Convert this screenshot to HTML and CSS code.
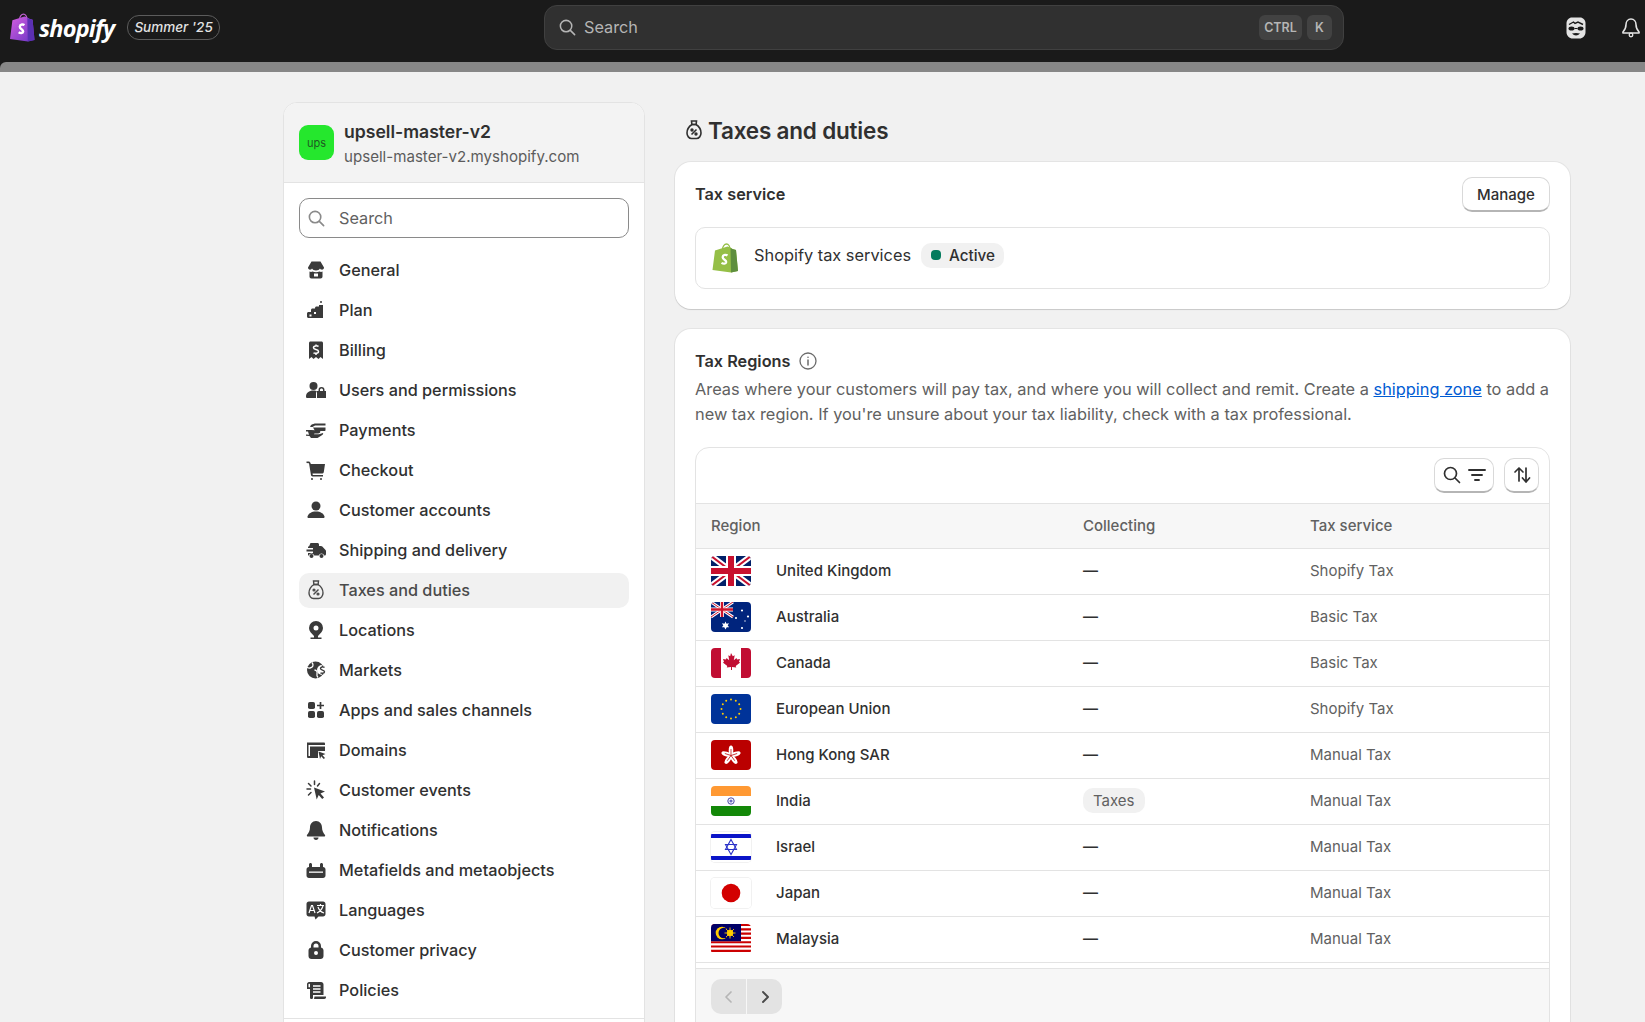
FILE: index.html
```html
<!DOCTYPE html>
<html lang="en">
<head>
    <meta charset="UTF-8">
    <meta name="viewport" content="width=device-width, initial-scale=1.0">
    <title>Taxes and duties</title>
    <link rel="stylesheet" href="styles.css">
</head>
<body>
    <div class="topbar">
        <div class="brand">
            <svg class="logo-bag" viewBox="0 0 26 30">
                <defs>
                    <linearGradient id="bag" x1="0" y1="0" x2="1" y2="1">
                        <stop offset="0" stop-color="#d65ee0"/>
                        <stop offset="1" stop-color="#6a35c4"/>
                    </linearGradient>
                </defs>
                <path d="M10 6.500c0-3 2-5.500 4-5.500 2 0 3.500 2.500 3.500 5.500" fill="none" stroke="#c060d0" stroke-width="1.300"/>
                <path d="M2.500 7.500 15 3.500l3 1 2 1.500 3.500 1 2 21-7 1.500L0 27z" fill="url(#bag)"/>
                <path d="M18 5l2 1 3.500 1 2 21-7 1.500z" fill="#5b30b4"/>
                <path d="M15 12.500c-1-.8-4.500-1.300-4.800 1.500-.3 2.700 3.800 2.800 3.500 5.200-.3 2-3 1.800-4.700.7" fill="none" stroke="#fff" stroke-width="2.500"/>
            </svg>
            <span class="wordmark">shopify</span>
            <span class="edition">Summer '25</span>
        </div>
        <div class="global-search">
            <svg class="global-search-icon" viewBox="0 0 20 20"><circle cx="8.500" cy="8.500" r="6" fill="none" stroke="#b5b5b5" stroke-width="1.600"/><path d="M13 13l4.500 4.500" stroke="#b5b5b5" stroke-width="1.600" stroke-linecap="round"/></svg>
            <span class="global-search-text">Search</span>
            <span class="key key-ctrl">CTRL</span>
            <span class="key key-k">K</span>
        </div>
        <div class="top-actions">
            <svg class="top-face" viewBox="0 0 20 22">
                <path d="M6 .5h8c3 0 5.500 2.500 5.500 5.500v9c0 4-3 6.500-6 6.500h-7c-3 0-6-2.500-6-6.500V6C.500 3 3 .5 6 .5z" fill="#e3e3e3"/>
                <path d="M3 7.500 7.500 5l1.500 1.500L12 5l5 2.500" fill="none" stroke="#1a1a1a" stroke-width="1.400"/>
                <ellipse cx="5.500" cy="11.500" rx="3" ry="2" fill="#1a1a1a"/>
                <ellipse cx="14.500" cy="11.500" rx="3" ry="2" fill="#1a1a1a"/>
                <path d="M8.500 11.500h3" stroke="#1a1a1a" stroke-width="1"/>
                <path d="M6 16.500c2.500 2.500 5.500 2.500 8 0-2.500-.8-5.500-.8-8 0z" fill="#1a1a1a"/>
            </svg>
            <svg class="top-bell" viewBox="0 0 20 22">
                <path d="M10 1.500c-3.500 0-5.500 3-5.500 6 0 4-1.500 6.500-3.500 8.500v1h18v-1c-2-2-3.500-4.500-3.500-8.500 0-3-2-6-5.500-6z" fill="none" stroke="#e3e3e3" stroke-width="1.700" stroke-linejoin="round"/>
                <circle cx="10" cy="19.300" r="2" fill="none" stroke="#e3e3e3" stroke-width="1.500"/>
            </svg>
        </div>
    </div>
    <div class="strip-wrap"><div class="strip"></div></div>

    <div class="page">
        <div class="settings-nav">
            <div class="shop-head">
                <div class="shop-avatar">ups</div>
                <div class="shop-text">
                    <div class="shop-name">upsell-master-v2</div>
                    <div class="shop-domain">upsell-master-v2.myshopify.com</div>
                </div>
            </div>
            <div class="nav-body">
                <div class="nav-search">
                    <svg class="nav-search-icon" viewBox="0 0 20 20"><circle cx="8.500" cy="8.500" r="6" fill="none" stroke="#8a8a8a" stroke-width="1.700"/><path d="M13 13l4.500 4.500" stroke="#8a8a8a" stroke-width="1.700" stroke-linecap="round"/></svg>
                    <span>Search</span>
                </div>
                <ul class="nav-list">
                    <li><svg viewBox="0 0 20 20"><path d="M5.500 1.500h9L18 7.500c.3 2-2.800 3.200-4 1-1 2.500-7 2.500-8 0-1.200 2.200-4.300 1-4-1z"/><path d="M3.500 11.500c1 .5 2 .5 3 0 2 1 5 1 7 0 1 .5 2 .5 3 0v5c0 1-.7 2-2 2h-9c-1.300 0-2-1-2-2zM8 13.500v3h4v-3z" fill-rule="evenodd"/></svg>General</li>
                    <li><svg viewBox="0 0 20 20"><path d="M15 1v2"  stroke="#3a3a3a" stroke-width="1.500" fill="none"/><path d="M13 5h4v13H2.500c-.8 0-1.500-.7-1.500-1.500v-3c0-.8.700-1.500 1.500-1.500H5v-2c0-.8.700-1.500 1.500-1.500H9V8c0-.8.700-1.500 1.500-1.500H13z"/><path d="M3.500 14.500h2v2h-2zM8 12h2v2H8z" fill="#fff"/></svg>Plan</li>
                    <li><svg viewBox="0 0 20 20"><path d="M4.500 1.500h11c.8 0 1.500.7 1.500 1.500v16l-2.500-2-2 2-2.500-2-2.500 2-2-2L3 19V3c0-.8.700-1.500 1.500-1.500z"/><path d="M12.500 6.500c-.8-.8-5-1.200-5 1.200 0 2.300 5 1.300 5 3.800 0 2.300-4.200 2-5 1.200M10 4.500v1.500M10 13.500V15" fill="none" stroke="#fff" stroke-width="1.500"/></svg>Billing</li>
                    <li><svg viewBox="0 0 20 20"><circle cx="7.500" cy="6" r="4"/><path d="M0 16.500c0-3.500 3-6 7.500-6 1.500 0 2.500.3 3.500.7-.7.8-1 1.500-1 2.800v4H1.500C.5 18 0 17.500 0 16.500z"/><path d="M15.500 7a3 3 0 0 1 3 3v1H20v7h-9v-7h1.500v-1a3 3 0 0 1 3-3zm-1.500 4h3v-1c0-2-3-2-3 0z" fill-rule="evenodd"/></svg>Users and permissions</li>
                    <li><svg viewBox="0 0 20 20"><path d="M5 5c2-1 3-1.500 5-1.500h9.500v2H9L6.500 7H4z"/><path d="M7 7.500h12.500V10c0 .6-.4 1-1 1H9z"/><path d="M0 10h5l9 .5c1 1.800-.5 3-2 3H8.500l-.5.7h5l4-1.200c.8 1-.7 2-1.500 2.500l-4 2.500H5L3.500 16 0 15.800V14.500l3 .3-1-3.300H0z" fill-rule="evenodd"/></svg>Payments</li>
                    <li><svg viewBox="0 0 20 20"><path d="M.5 1.500h2c1 0 1.800.7 2 1.500l.3 1H19l-1.200 8c-.2 1-1 1.500-2 1.500H6.500l.3 1.500H17v1.500H6.500c-.8 0-1.300-.5-1.500-1.200L3 3.200 .5 3z"/><circle cx="6" cy="19" r="1"/><circle cx="15" cy="19" r="1"/></svg>Checkout</li>
                    <li><svg viewBox="0 0 20 20"><circle cx="10" cy="6" r="4.500"/><path d="M2.500 18c-.8 0-1.200-.7-1-1.500.8-3 4-5 8.500-5s7.700 2 8.500 5c.2.800-.2 1.500-1 1.500z"/></svg>Customer accounts</li>
                    <li><svg viewBox="0 0 20 20"><path d="M4.500 3h7c.8 0 1.500.7 1.500 1.500V6h2c.5 0 1 .2 1.300.6L19.500 10c.3.300.5.800.5 1.200V14c0 .8-.5 1.500-1.300 1.500h-.4a3 3 0 0 0-5.600 0H8.300a3 3 0 0 0-5.600 0H2V13h5v-1.500H.5V9.500h6.500V8H2V6.500h1z"/><circle cx="5.500" cy="16" r="2"/><circle cx="15.500" cy="16" r="2"/></svg>Shipping and delivery</li>
                    <li class="active"><svg viewBox="0 0 20 20" stroke="#4a4a4a" stroke-width="1.400"><path d="M7.500 1h5l-.4 3.500H7.900z"/><path d="M8 4.500C4 7 3 10 3 13c0 3 2 5.500 4.500 5.500h5c2.500 0 4.500-2.500 4.500-5.500 0-3-1-6-5-8.500z"/><path d="M7.500 14.500l5-5"/><circle cx="8" cy="10" r=".9"/><circle cx="12" cy="14" r=".9"/></svg>Taxes and duties</li>
                    <li><svg viewBox="0 0 20 20"><path d="M10 1a7 7 0 0 1 7 7c0 3-2.500 5.500-5 8v1.500h3.500V19h-11v-1.500H8V16c-2.500-2.500-5-5-5-8a7 7 0 0 1 7-7zm0 4.500a2.500 2.500 0 1 0 0 5 2.500 2.500 0 0 0 0-5z" fill-rule="evenodd"/></svg>Locations</li>
                    <li><svg viewBox="0 0 20 20"><circle cx="9.500" cy="10" r="8.500"/><path d="M6 2.500C8 5 7 7.500 4 8c-1.500.3-2.500-.2-3-.8M8.500 10c2 .3 3 1.500 2.500 3.500-.3 1.500 0 3 1 4" fill="none" stroke="#fff" stroke-width="1.300"/><circle cx="16" cy="10" r="5" fill="#fff"/><path d="M18.500 7.500c-.8-.8-4-1-4 1 0 2 4 1.200 4 3.200 0 2-3.200 1.700-4 1M16.500 5.500v1.800M16.500 13v1.800" fill="none" stroke="#3a3a3a" stroke-width="1.400"/></svg>Markets</li>
                    <li><svg viewBox="0 0 20 20"><rect x="2" y="2" width="7" height="7" rx="1.800"/><rect x="2" y="11" width="7" height="7" rx="1.800"/><rect x="11" y="11" width="7" height="7" rx="1.800"/><path d="M14.500 2v7M11 5.500h7" stroke="#3a3a3a" stroke-width="1.700" fill="none"/></svg>Apps and sales channels</li>
                    <li><svg viewBox="0 0 20 20"><path d="M1 2.500h17c.5 0 1 .5 1 1V5H2.500v11H5v2H2.500C1.500 18 1 17.500 1 16.500z"/><path d="M4 6.500h15V11l-7 0v7H5c-.5 0-1-.5-1-1z"/><path d="M12.500 11.500l7 2.500-3 1.200 2.500 2.800-1.300 1-2.500-2.800-1.200 2.800z"/></svg>Domains</li>
                    <li><svg viewBox="0 0 20 20"><path d="M8 7.500l11 4-4.500 2 3.500 4-1.800 1.500-3.500-4-2 4.500z"/><path d="M8.500 1v3.500M2.500 3.500 5 6M1 9h3.500M2.500 15 5 12.500M13.500 3.500 11.500 6" fill="none" stroke="#3a3a3a" stroke-width="1.500" stroke-linecap="round"/></svg>Customer events</li>
                    <li><svg viewBox="0 0 20 20"><path d="M10 1c-3.800 0-6 3-6 6.500 0 3.500-1.500 5.500-3 7.500-.5.800 0 1.500 1 1.500h16c1 0 1.500-.7 1-1.500-1.500-2-3-4-3-7.500C16 4 13.800 1 10 1z"/><path d="M7.500 17.500c0 1.500 1 2.500 2.500 2.500s2.500-1 2.500-2.500z"/></svg>Notifications</li>
                    <li><svg viewBox="0 0 20 20"><path d="M4.500 3c.8 0 1.500.7 1.500 1.500V7h8V4.500c0-.8.700-1.500 1.500-1.500S17 3.700 17 4.500V7c1.500 0 2.500 1 2.500 2.500v6c0 1.500-1 2.500-2.500 2.500H3c-1.500 0-2.500-1-2.500-2.500v-6C.5 8 1.500 7 3 7V4.500C3 3.700 3.700 3 4.500 3z"/><path d="M3 11.500h14v1.300H3z" fill="#fff"/></svg>Metafields and metaobjects</li>
                    <li><svg viewBox="0 0 20 20"><path d="M3 1.500h14c1.500 0 2.500 1 2.500 2.500v10c0 1.500-1 2.500-2.500 2.500h-4.500L9.500 19.500 8.500 16.500H3C1.500 16.500.5 15.500.5 14V4C.5 2.500 1.500 1.500 3 1.500z"/><path d="M3 13l2.500-7.500h1L9 13M4 10.500h4M11 5.500h7M14.500 4v1.500M17 6c-1 3-3 5.500-6 7M12 7c1 3 3 5 6 6" fill="none" stroke="#fff" stroke-width="1.200"/></svg>Languages</li>
                    <li><svg viewBox="0 0 20 20"><path d="M10 1a5 5 0 0 1 5 5v1.500c1.500.3 2.500 1.500 2.500 3V16c0 1.700-1.300 3-3 3h-9c-1.700 0-3-1.300-3-3v-5.500c0-1.500 1-2.700 2.500-3V6a5 5 0 0 1 5-5zm-2.500 6.500h5V6a2.500 2.500 0 0 0-5 0zM10 11a2 2 0 1 0 0 4 2 2 0 0 0 0-4z" fill-rule="evenodd"/></svg>Customer privacy</li>
                    <li><svg viewBox="0 0 20 20"><path d="M3 2h12c1.500 0 2.500 1 2.500 2.500V15H7v2.500c0 1-.7 1.500-1.500 1.500S4 18.500 4 17.500V9H1V4c0-1 1-2 2-2zm0 1.800c-.3 0-.5.200-.5.500v3H4V4.300c0-.3-.2-.5-.5-.5z" fill-rule="evenodd"/><path d="M7 6h7.500M7 9h7.500M7 12h7.500" stroke="#fff" stroke-width="1.400" fill="none"/><path d="M8.500 16.500H20v.8c0 1-.8 1.700-1.700 1.700H8z"/></svg>Policies</li>
                </ul>
            </div>
            <div class="nav-divider"></div>
        </div>

        <div class="main">
            <div class="page-title">
                <svg viewBox="0 0 20 20" fill="none" stroke="#303030" stroke-width="1.600"><path d="M7.500 1h5l-.4 3.500H7.900z"/><path d="M8 4.500C4 7 3 10 3 13c0 3 2 5.500 4.500 5.500h5c2.500 0 4.500-2.500 4.500-5.500 0-3-1-6-5-8.500z"/><path d="M7.500 14.500l5-5"/><circle cx="8" cy="10" r=".9"/><circle cx="12" cy="14" r=".9"/></svg>
                <h1>Taxes and duties</h1>
            </div>

            <div class="card">
                <div class="card-head">
                    <h2>Tax service</h2>
                    <button class="btn">Manage</button>
                </div>
                <div class="service">
                    <svg class="service-bag" viewBox="0 0 26 30">
                        <path d="M10 6.500c0-3 2-5.500 4-5.500 2 0 3.500 2.500 3.500 5.500" fill="none" stroke="#95bf47" stroke-width="1.300"/>
                        <path d="M2.500 7.500 15 3.500l3 1 2 1.500 3.500 1 2 21-7 1.500L0 27z" fill="#95bf47"/>
                        <path d="M18 5l2 1 3.500 1 2 21-7 1.500z" fill="#5e8e3e"/>
                        <path d="M15 12.500c-1-.8-4.500-1.300-4.800 1.500-.3 2.700 3.800 2.800 3.500 5.200-.3 2-3 1.800-4.700.7" fill="none" stroke="#fff" stroke-width="2.300"/>
                    </svg>
                    <span class="service-name">Shopify tax services</span>
                    <span class="badge-active"><span class="dot"></span>Active</span>
                </div>
            </div>

            <div class="card regions">
                <div class="regions-title">
                    <h2>Tax Regions</h2>
                    <svg viewBox="0 0 20 20" fill="none" stroke="#6b6b6b" stroke-width="1.300"><circle cx="10" cy="10" r="8"/><path d="M10 9v5" stroke-width="1.500" stroke-linecap="round"/><circle cx="10" cy="6.300" r=".8" fill="#6b6b6b" stroke="none"/></svg>
                </div>
                <p class="regions-text">Areas where your customers will pay tax, and where you will collect and remit. Create a <a href="#">shipping zone</a> to add a new tax region. If you're unsure about your tax liability, check with a tax professional.</p>

                <div class="table-box">
                    <div class="toolbar">
                        <button class="tool tool-wide">
                            <svg viewBox="0 0 20 20" fill="none" stroke="#303030" stroke-width="1.700"><circle cx="8.500" cy="8.500" r="6"/><path d="M13 13l4.500 4.500" stroke-linecap="round"/></svg>
                            <svg viewBox="0 0 20 20" fill="none" stroke="#303030" stroke-width="1.900"><path d="M2 5h16M5 10h10M8 15h4" stroke-linecap="round"/></svg>
                        </button>
                        <button class="tool">
                            <svg viewBox="0 0 20 20" fill="none" stroke="#303030" stroke-width="1.700" stroke-linecap="round" stroke-linejoin="round"><path d="M7 16V3M3 7l4-4 4 4"/><path d="M14 3v14M10.500 13l3.500 4 3.500-4"/></svg>
                        </button>
                    </div>
                    <table>
                        <colgroup><col class="col-region"><col class="col-collect"><col></colgroup>
                        <thead>
                            <tr><th>Region</th><th>Collecting</th><th>Tax service</th></tr>
                        </thead>
                        <tbody>
                            <tr>
                                <td><div class="region"><svg class="flag" viewBox="0 0 40 30"><rect width="40" height="30" fill="#012169"/><path d="M0 0l40 30M40 0 0 30" stroke="#fff" stroke-width="6"/><path d="M0 0l40 30M40 0 0 30" stroke="#c8102e" stroke-width="2"/><path d="M20 0v30M0 15h40" stroke="#fff" stroke-width="10"/><path d="M20 0v30M0 15h40" stroke="#c8102e" stroke-width="6"/></svg>United Kingdom</div></td>
                                <td>—</td><td class="muted">Shopify Tax</td>
                            </tr>
                            <tr>
                                <td><div class="region"><svg class="flag" viewBox="0 0 40 30"><rect width="40" height="30" fill="#00247d"/><path d="M0 0l22 15M22 0 0 15" stroke="#fff" stroke-width="3"/><path d="M0 0l22 15M22 0 0 15" stroke="#cf142b" stroke-width="1"/><path d="M11 0v15M0 7.500h22" stroke="#fff" stroke-width="4"/><path d="M11 0v15M0 7.500h22" stroke="#cf142b" stroke-width="2.400"/><path d="M14.500 19.500l1 2.300 2.500-.5-1.300 2.200 1.500 1.800-2.500-.1-1.200 2.300-1.200-2.300-2.500.1 1.500-1.800-1.300-2.200 2.500.5z" fill="#fff"/><circle cx="31" cy="8.500" r="1.100" fill="#fff"/><circle cx="25" cy="16" r="1.100" fill="#fff"/><circle cx="37" cy="14.500" r="1.100" fill="#fff"/><circle cx="34" cy="19" r=".7" fill="#fff"/><circle cx="31" cy="26" r="1.100" fill="#fff"/></svg>Australia</div></td>
                                <td>—</td><td class="muted">Basic Tax</td>
                            </tr>
                            <tr>
                                <td><div class="region"><svg class="flag" viewBox="0 0 40 30"><rect width="40" height="30" fill="#fff"/><rect width="10" height="30" fill="#c10e33"/><rect x="30" width="10" height="30" fill="#c10e33"/><path d="M20 5l1.800 3.300 1.900-1-.9 5 2.700-2.400.5 1.500 3-.5-1 3 1.200.7-4.500 3.400.5 1.500-4.200-.5V22h-1v-3l-4.200.5.500-1.500-4.500-3.400 1.200-.7-1-3 3 .5.500-1.500 2.700 2.400-.9-5 1.900 1z" fill="#c10e33"/></svg>Canada</div></td>
                                <td>—</td><td class="muted">Basic Tax</td>
                            </tr>
                            <tr>
                                <td><div class="region"><svg class="flag" viewBox="0 0 40 30"><rect width="40" height="30" fill="#003399"/><g fill="#ffcc00"><circle cx="20" cy="5.500" r="1"/><circle cx="24.800" cy="6.800" r="1"/><circle cx="28.200" cy="10.200" r="1"/><circle cx="29.500" cy="15" r="1"/><circle cx="28.200" cy="19.800" r="1"/><circle cx="24.800" cy="23.200" r="1"/><circle cx="20" cy="24.500" r="1"/><circle cx="15.200" cy="23.200" r="1"/><circle cx="11.800" cy="19.800" r="1"/><circle cx="10.500" cy="15" r="1"/><circle cx="11.800" cy="10.200" r="1"/><circle cx="15.200" cy="6.800" r="1"/></g></svg>European Union</div></td>
                                <td>—</td><td class="muted">Shopify Tax</td>
                            </tr>
                            <tr>
                                <td><div class="region"><svg class="flag" viewBox="0 0 40 30"><rect width="40" height="30" fill="#ba0000"/><g fill="#fff"><ellipse cx="20" cy="10.500" rx="2.300" ry="5"/><ellipse cx="20" cy="10.500" rx="2.300" ry="5" transform="rotate(72 20 15.500)"/><ellipse cx="20" cy="10.500" rx="2.300" ry="5" transform="rotate(144 20 15.500)"/><ellipse cx="20" cy="10.500" rx="2.300" ry="5" transform="rotate(216 20 15.500)"/><ellipse cx="20" cy="10.500" rx="2.300" ry="5" transform="rotate(288 20 15.500)"/></g><g stroke="#ba0000" stroke-width=".7"><path d="M20 15.500V9"/><path d="M20 15.500V9" transform="rotate(72 20 15.500)"/><path d="M20 15.500V9" transform="rotate(144 20 15.500)"/><path d="M20 15.500V9" transform="rotate(216 20 15.500)"/><path d="M20 15.500V9" transform="rotate(288 20 15.500)"/></g></svg>Hong Kong SAR</div></td>
                                <td>—</td><td class="muted">Manual Tax</td>
                            </tr>
                            <tr>
                                <td><div class="region"><svg class="flag" viewBox="0 0 40 30"><rect width="40" height="30" fill="#fff"/><rect width="40" height="10" fill="#ff9933"/><rect y="20" width="40" height="10" fill="#138808"/><circle cx="20" cy="15" r="3.200" fill="none" stroke="#4a4aa8" stroke-width="1"/><circle cx="20" cy="15" r="1.600" fill="#6c6cc0"/></svg>India</div></td>
                                <td><span class="tag">Taxes</span></td><td class="muted">Manual Tax</td>
                            </tr>
                            <tr>
                                <td><div class="region"><svg class="flag flag-light" viewBox="0 0 40 30"><rect width="40" height="30" fill="#fff"/><rect y="2" width="40" height="4" fill="#0a14c8"/><rect y="24" width="40" height="4" fill="#0a14c8"/><path d="M20 7.500l5.500 10H14.500zM20 22.500l-5.500-10h11z" fill="none" stroke="#2a32c8" stroke-width="1.100"/></svg>Israel</div></td>
                                <td>—</td><td class="muted">Manual Tax</td>
                            </tr>
                            <tr>
                                <td><div class="region"><svg class="flag flag-light" viewBox="0 0 40 30"><rect width="40" height="30" fill="#fff"/><circle cx="20" cy="15" r="9.300" fill="#d30000"/></svg>Japan</div></td>
                                <td>—</td><td class="muted">Manual Tax</td>
                            </tr>
                            <tr>
                                <td><div class="region"><svg class="flag" viewBox="0 0 40 30"><rect width="40" height="30" fill="#fff"/><path d="M0 1h40M0 5.300h40M0 9.600h40M0 13.900h40M0 18.200h40M0 22.500h40M0 26.800h40" stroke="#cc0001" stroke-width="2.150"/><rect width="30" height="17.200" fill="#010066"/><circle cx="11" cy="9" r="6.300" fill="#fc0"/><circle cx="12.800" cy="9" r="5.300" fill="#010066"/><circle cx="19" cy="9" r="3.200" fill="#fc0"/><path d="M19 3.500v11M13.500 9h11M15 5l8 8M23 5l-8 8" stroke="#fc0" stroke-width=".9"/></svg>Malaysia</div></td>
                                <td>—</td><td class="muted">Manual Tax</td>
                            </tr>
                        </tbody>
                    </table>
                    <div class="table-foot">
                        <div class="pager">
                            <span class="pager-btn"><svg viewBox="0 0 20 20" fill="none" stroke="#b5b5b5" stroke-width="1.700" stroke-linecap="round" stroke-linejoin="round"><path d="M12 5l-5 5 5 5"/></svg></span>
                            <span class="pager-btn"><svg viewBox="0 0 20 20" fill="none" stroke="#4a4a4a" stroke-width="1.900" stroke-linecap="round" stroke-linejoin="round"><path d="M8 5l5 5-5 5"/></svg></span>
                        </div>
                    </div>
                </div>
            </div>
        </div>
    </div>
</body>
</html>
```

FILE: styles.css
```css
* {
    box-sizing: border-box;
}
body {
    margin: 0;
    height: 100vh;
    overflow: hidden;
    font-family: Inter, "Noto Sans", sans-serif;
    font-size: 16.25px;
    color: #303030;
    background-color: #f1f1f1;
}
h1, h2, p {
    margin: 0;
}

/* top bar */
.topbar {
    display: flex;
    align-items: center;
    height: 62px;
    padding-bottom: 7px;
    background-color: #1a1a1a;
}
.brand {
    display: flex;
    align-items: center;
    width: 544px;
    padding-left: 10px;
}
.logo-bag {
    width: 25px;
    height: 29px;
}
.wordmark {
    margin-left: 4px;
    font-family: "Open Sans", sans-serif;
    font-size: 23.5px;
    font-weight: 700;
    font-style: italic;
    letter-spacing: -0.8px;
    color: white;
}
.edition {
    margin-left: 13px;
    padding: 0 6px;
    height: 25px;
    line-height: 23px;
    border: 1px solid #5c5c5c;
    border-radius: 12px;
    font-size: 13.5px;
    font-weight: 500;
    font-style: italic;
    color: #e3e3e3;
}
.global-search {
    display: flex;
    align-items: center;
    width: 800px;
    height: 45px;
    padding: 0 11px 0 13px;
    background-color: #303030;
    border: 1px solid #404040;
    border-radius: 13px;
    color: #b5b5b5;
}
.global-search-icon {
    width: 19px;
    height: 19px;
    margin-right: 7px;
}
.global-search-text {
    flex-grow: 1;
    margin-bottom: 2px;
}
.key {
    display: flex;
    align-items: center;
    justify-content: center;
    height: 25px;
    background-color: #424242;
    border-radius: 6px;
    font-size: 12.5px;
    font-weight: 600;
    color: #b5b5b5;
}
.key-ctrl {
    width: 43px;
    margin-right: 5px;
}
.key-k {
    width: 25px;
}
.top-actions {
    display: flex;
    align-items: center;
    margin-left: auto;
    padding-right: 5px;
}
.top-face {
    width: 20px;
    height: 22px;
    margin-right: 36px;
}
.top-bell {
    width: 18px;
    height: 21px;
}
.strip-wrap {
    background-color: #1a1a1a;
}
.strip {
    height: 10px;
    background-color: #878787;
    border-top-left-radius: 6px;
}

/* layout */
.page {
    display: flex;
    align-items: flex-start;
    gap: 30px;
    padding-left: 283px;
}

/* settings sidebar */
.settings-nav {
    width: 362px;
    margin-top: 30px;
    background-color: white;
    border: 1px solid #e3e3e3;
    border-radius: 14px;
    overflow: hidden;
}
.shop-head {
    display: flex;
    align-items: center;
    gap: 10px;
    height: 80px;
    padding: 0 15px;
    background-color: #f3f3f3;
    border-bottom: 1px solid #e3e3e3;
}
.shop-avatar {
    display: flex;
    align-items: center;
    justify-content: center;
    width: 35px;
    height: 35px;
    background-color: #25e72d;
    border-radius: 9px;
    font-size: 11px;
    color: #1f5a22;
}
.shop-text {
    padding-top: 2px;
}
.shop-name {
    font-size: 17.6px;
    font-weight: 600;
    line-height: 24px;
}
.shop-domain {
    margin-top: 2px;
    font-size: 15.1px;
    line-height: 22px;
    color: #5c5c5c;
}
.nav-body {
    padding: 15px 15px 10px;
}
.nav-search {
    display: flex;
    align-items: center;
    height: 40px;
    padding-left: 7px;
    border: 1px solid #8a8a8a;
    border-radius: 10px;
    color: #616161;
}
.nav-search-icon {
    width: 19px;
    height: 19px;
    margin-right: 13px;
}
.nav-list {
    list-style: none;
    margin: 15px 0 0;
    padding: 0;
}
.nav-list li {
    display: flex;
    align-items: center;
    height: 35px;
    margin-bottom: 5px;
    padding: 0 0 2px 7px;
    border-radius: 10px;
    font-weight: 500;
    color: #303030;
}
.nav-list li:last-child {
    margin-bottom: 0;
}
.nav-list li svg {
    width: 20px;
    height: 20px;
    margin-right: 13px;
    fill: #3a3a3a;
}
.nav-list li.active {
    background-color: #f1f1f1;
    color: #4a4a4a;
}
.nav-list li.active svg {
    fill: none;
}
.nav-divider {
    height: 30px;
    border-top: 1px solid #e3e3e3;
}

/* main column */
.main {
    width: 895px;
    margin-top: 30px;
}
.page-title {
    display: flex;
    align-items: center;
    height: 60px;
    padding: 0 0 4px 9px;
}
.page-title svg {
    width: 20px;
    height: 20px;
    margin-right: 4px;
}
.page-title h1 {
    font-size: 22.5px;
    font-weight: 600;
    letter-spacing: -0.2px;
}
.card {
    margin-bottom: 20px;
    padding: 20px;
    background-color: white;
    border-radius: 16px;
    box-shadow: 0 1px 1px rgba(0, 0, 0, 0.12), 0 0 0 1px rgba(0, 0, 0, 0.05);
}
.card-head {
    display: flex;
    align-items: center;
    justify-content: space-between;
    height: 35px;
    margin-top: -5px;
    margin-bottom: 15px;
}
.card-head h2 {
    padding-bottom: 2px;
}
.card h2 {
    font-size: 16.25px;
    font-weight: 600;
}
.btn {
    width: 88px;
    height: 35px;
    background-color: white;
    border: 1px solid #d9d9d9;
    border-bottom: 2px solid #b5b5b5;
    border-radius: 10px;
    font-family: inherit;
    font-size: 15px;
    font-weight: 500;
    color: #303030;
}
.service {
    display: flex;
    align-items: center;
    height: 62px;
    padding: 0 0 6px 16px;
    border: 1px solid #e3e3e3;
    border-radius: 10px;
}
.service-bag {
    width: 27px;
    height: 30px;
    margin: 5px 15px 0 0;
}
.service-name {
    margin-right: 10px;
    font-size: 16.35px;
}
.badge-active {
    display: flex;
    align-items: center;
    height: 25px;
    padding: 0 9px 0 10px;
    background-color: #f1f1f1;
    border-radius: 10px;
    font-size: 15.25px;
    font-weight: 500;
}
.dot {
    width: 10px;
    height: 10px;
    margin-right: 8px;
    background-color: #047b5d;
    border-radius: 4px;
}
.regions-title {
    display: flex;
    align-items: center;
    height: 20px;
    margin-top: 2px;
}
.regions-title svg {
    width: 20px;
    height: 20px;
    margin-left: 8px;
}
.regions-text {
    margin-top: 6px;
    font-size: 16.35px;
    line-height: 25px;
    color: #616161;
}
.regions-text a {
    color: #005bd3;
}

/* table */
.table-box {
    margin-top: 20px;
    border: 1px solid #e3e3e3;
    border-radius: 14px;
    overflow: hidden;
}
.toolbar {
    display: flex;
    justify-content: flex-end;
    gap: 10px;
    height: 55px;
    padding: 10px 10px 0 0;
}
.tool {
    display: flex;
    align-items: center;
    justify-content: center;
    gap: 5px;
    width: 35px;
    height: 35px;
    padding: 0;
    background-color: white;
    border: 1px solid #d9d9d9;
    border-bottom: 2px solid #b5b5b5;
    border-radius: 10px;
}
.tool-wide {
    width: 60px;
}
.tool svg {
    width: 20px;
    height: 20px;
}
table {
    width: 100%;
    table-layout: fixed;
    border-collapse: collapse;
}
.col-region {
    width: 372px;
}
.col-collect {
    width: 227px;
}
th {
    height: 45px;
    padding: 0 15px 1px;
    background-color: #f7f7f7;
    border-top: 1px solid #e3e3e3;
    border-bottom: 1px solid #e3e3e3;
    text-align: left;
    font-size: 15px;
    font-weight: 500;
    color: #616161;
}
td {
    height: 46px;
    padding: 0 15px 3px;
    border-bottom: 1px solid #e3e3e3;
    font-size: 15px;
    font-weight: 500;
}
td.muted {
    font-weight: 400;
    color: #616161;
}
.region {
    display: flex;
    align-items: center;
}
.flag {
    width: 40px;
    height: 30px;
    margin: 2px 25px 0 0;
    border-radius: 4px;
}
.flag-light {
    box-shadow: 0 0 0 1px #f1f1f1;
}
.tag {
    display: inline-block;
    height: 25px;
    padding: 0 10px;
    line-height: 25px;
    background-color: #f1f1f1;
    border-radius: 10px;
    color: #616161;
    font-weight: 400;
}
.table-foot {
    height: 80px;
    margin-top: 5px;
    padding: 10px 15px;
    background-color: #f7f7f7;
    border-top: 1px solid #e3e3e3;
}
.pager {
    display: flex;
    gap: 1px;
    width: 71px;
    height: 35px;
}
.pager-btn {
    display: flex;
    align-items: center;
    justify-content: center;
    flex: 1;
    background-color: #e3e3e3;
}
.pager-btn:first-child {
    border-radius: 10px 0 0 10px;
}
.pager-btn:last-child {
    border-radius: 0 10px 10px 0;
}
.pager-btn svg {
    width: 20px;
    height: 20px;
}
```
